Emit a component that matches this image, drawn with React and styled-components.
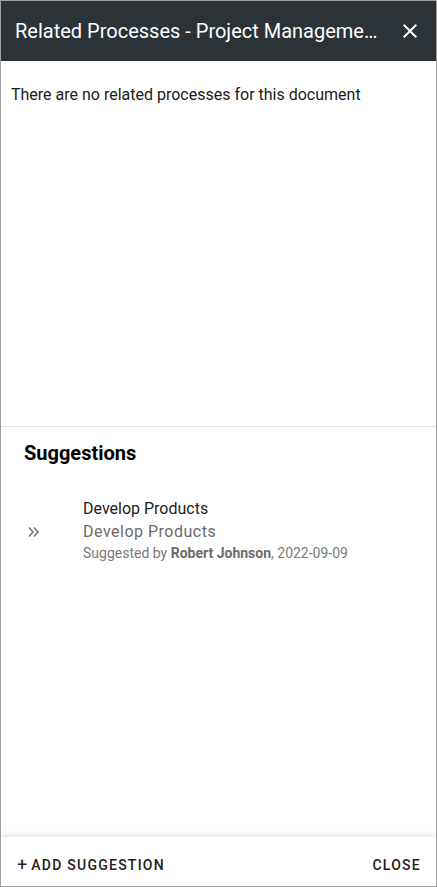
import React from "react";
import styled, { createGlobalStyle } from "styled-components";

const GlobalStyle = createGlobalStyle`
  html, body {
    margin: 0;
    padding: 0;
    background: #ffffff;
  }
  body {
    font-family: Roboto, "Liberation Sans", sans-serif;
  }
`;

export default function App() {
  const suggestions = [
    {
      title: "Develop Products",
      subtitle: "Develop Products",
      author: "Robert Johnson",
      date: "2022-09-09",
    },
  ];

  return (
    <>
      <GlobalStyle />
      <Panel>
        <Header>
          <Title>Related Processes - Project Management</Title>
          <CloseIcon aria-label="close">
            <svg width="24" height="24" viewBox="0 0 24 24">
              <path
                d="M19 6.41 17.59 5 12 10.59 6.41 5 5 6.41 10.59 12 5 17.59 6.41 19 12 13.41 17.59 19 19 17.59 13.41 12z"
                fill="#ffffff"
              />
            </svg>
          </CloseIcon>
        </Header>

        <Body>
          <EmptyText>There are no related processes for this document</EmptyText>
        </Body>

        <SuggestionSection>
          <SectionTitle>Suggestions</SectionTitle>
          {suggestions.map((s, i) => (
            <SuggestionRow key={i}>
              <ChevronCell>
                <svg width="12" height="12" viewBox="0 0 12 12">
                  <path
                    d="M1 1.5 5 6 1 10.5M6 1.5 10 6 6 10.5"
                    fill="none"
                    stroke="#707070"
                    strokeWidth="1.5"
                  />
                </svg>
              </ChevronCell>
              <SuggestionText>
                <PrimaryLine>{s.title}</PrimaryLine>
                <SecondaryLine>{s.subtitle}</SecondaryLine>
                <MetaLine>
                  Suggested by <strong>{s.author}</strong>, {s.date}
                </MetaLine>
              </SuggestionText>
            </SuggestionRow>
          ))}
        </SuggestionSection>

        <Footer>
          <TextButton>
            <Plus>+</Plus>ADD SUGGESTION
          </TextButton>
          <TextButton>CLOSE</TextButton>
        </Footer>
      </Panel>
    </>
  );
}

const Panel = styled.div`
  box-sizing: border-box;
  width: 437px;
  height: 887px;
  border: 1px solid #a0a0a0;
  display: flex;
  flex-direction: column;
  background: #ffffff;
  overflow: hidden;
`;

const Header = styled.div`
  height: 60px;
  flex-shrink: 0;
  background: #2b3238;
  display: flex;
  align-items: center;
  padding: 0 14px 0 14px;
  gap: 18px;
`;

const Title = styled.div`
  flex: 1;
  min-width: 0;
  color: #ffffff;
  font-size: 20px;
  line-height: 26px;
  white-space: nowrap;
  overflow: hidden;
  text-overflow: ellipsis;
`;

const CloseIcon = styled.div`
  width: 24px;
  height: 24px;
  display: flex;
  align-items: center;
  justify-content: center;
  cursor: pointer;
`;

const Body = styled.div`
  height: 366px;
  flex-shrink: 0;
  border-bottom: 1px solid #e0e0e0;
  padding: 24px 10px 0;
  box-sizing: border-box;
`;

const EmptyText = styled.p`
  margin: 0;
  font-size: 16px;
  color: #1a1a1a;
`;

const SuggestionSection = styled.div`
  flex: 1;
  padding: 14px 0 0 23px;
`;

const SectionTitle = styled.h2`
  margin: 0 0 33px;
  font-size: 20px;
  font-weight: 700;
  color: #000000;
`;

const SuggestionRow = styled.div`
  display: flex;
  align-items: center;
`;

const ChevronCell = styled.div`
  width: 59px;
  display: flex;
  align-items: center;
  padding-left: 4px;
  padding-top: 4px;
  box-sizing: border-box;
`;

const SuggestionText = styled.div`
  display: flex;
  flex-direction: column;
`;

const PrimaryLine = styled.div`
  font-size: 16px;
  line-height: 22px;
  color: #212121;
`;

const SecondaryLine = styled.div`
  font-size: 16px;
  line-height: 24px;
  color: #6b6b6b;
  letter-spacing: 0.5px;
`;

const MetaLine = styled.div`
  font-size: 14px;
  line-height: 18px;
  color: #7a7a7a;

  strong {
    font-weight: 700;
    color: #6b6b6b;
  }
`;

const Footer = styled.div`
  height: 50px;
  flex-shrink: 0;
  box-sizing: border-box;
  display: flex;
  align-items: center;
  justify-content: space-between;
  padding: 6px 15px 0 16px;
  box-shadow: 0 -2px 4px rgba(0, 0, 0, 0.08);
  border-top: 1px solid #eeeeee;
`;

const TextButton = styled.button`
  background: none;
  border: none;
  padding: 0;
  font-family: Roboto, "Liberation Sans", sans-serif;
  font-size: 14px;
  font-weight: 500;
  letter-spacing: 1.25px;
  color: #212121;
  cursor: pointer;
  display: flex;
  align-items: center;
`;

const Plus = styled.span`
  font-size: 18px;
  font-weight: 400;
  margin-right: 4px;
  letter-spacing: 0;
`;
